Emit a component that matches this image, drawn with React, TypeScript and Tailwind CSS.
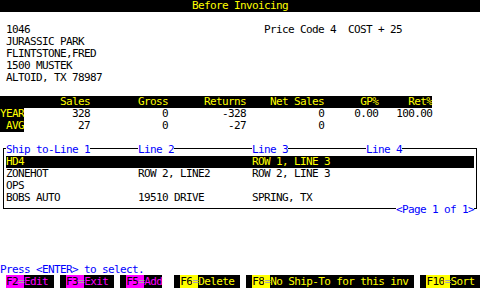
import React from 'react';

type Seg = { col: number; text: string; cls?: string };

// one 12px terminal line; segments are placed by column (6px per cell)
const Row = ({ segs = [], className = '' }: { segs?: Seg[]; className?: string }) => {
  let pos = 0;
  const parts: React.ReactNode[] = [];
  segs.forEach((s, i) => {
    if (s.col > pos) parts.push(' '.repeat(s.col - pos));
    parts.push(
      <span key={i} className={s.cls}>
        {s.text}
      </span>
    );
    pos = s.col + s.text.length;
  });
  return (
    <div className={`h-[12px] leading-[12px] whitespace-pre ${className}`}>{parts.length ? parts : ' '}</div>
  );
};

const Y = 'text-[#ffff00]';
const B = 'text-[#0000ff] bg-white';

const FKey = ({ k, label, bg, fg, pad = true }: { k: string; label: string; bg: string; fg: string; pad?: boolean }) => (
  <span className="bg-black">
    {pad ? ' ' : ''}
    <span className={`${bg} text-black`}>{k}</span>
    <span className={`${bg} text-[#a8a8a8]`}>=</span>
    <span className={fg}>{label}</span>
  </span>
);

export default function App() {
  return (
    <div className="w-[480px] h-[288px] bg-white text-black font-['DejaVu_Sans_Mono',monospace] text-[11px] tracking-[-0.622px] overflow-hidden">
      <Row className="bg-black" segs={[{ col: 32, text: 'Before Invoicing', cls: Y }]} />
      <Row />
      <Row
        segs={[
          { col: 1, text: '1046' },
          { col: 44, text: 'Price Code 4  COST + 25' },
        ]}
      />
      <Row segs={[{ col: 1, text: 'JURASSIC PARK' }]} />
      <Row segs={[{ col: 1, text: 'FLINTSTONE,FRED' }]} />
      <Row segs={[{ col: 1, text: '1500 MUSTEK' }]} />
      <Row segs={[{ col: 1, text: 'ALTOID, TX 78987' }]} />
      <Row />

      {/* sales history */}
      <Row
        className={`bg-black w-[432px] ${Y}`}
        segs={[
          { col: 10, text: 'Sales' },
          { col: 23, text: 'Gross' },
          { col: 34, text: 'Returns' },
          { col: 45, text: 'Net Sales' },
          { col: 60, text: 'GP%' },
          { col: 68, text: 'Ret%' },
        ]}
      />
      <Row
        segs={[
          { col: 0, text: 'YEAR', cls: `bg-black ${Y}` },
          { col: 12, text: '328' },
          { col: 27, text: '0' },
          { col: 37, text: '-328' },
          { col: 53, text: '0' },
          { col: 59, text: '0.00' },
          { col: 66, text: '100.00' },
        ]}
      />
      <Row
        segs={[
          { col: 0, text: ' AVG', cls: `bg-black ${Y}` },
          { col: 13, text: '27' },
          { col: 27, text: '0' },
          { col: 38, text: '-27' },
          { col: 53, text: '0' },
        ]}
      />
      <Row />

      {/* ship-to list */}
      <div className="relative">
        <div className="absolute left-[3px] right-[3px] top-[4px] bottom-[7px] border border-black" />
        <Row
          className="relative"
          segs={[
            { col: 1, text: 'Ship to-Line 1', cls: B },
            { col: 23, text: 'Line 2', cls: B },
            { col: 42, text: 'Line 3', cls: B },
            { col: 61, text: 'Line 4', cls: B },
          ]}
        />
        <Row
          className={`relative bg-black ml-[6px] w-[468px] ${Y}`}
          segs={[
            { col: 0, text: 'HD4' },
            { col: 41, text: 'ROW 1, LINE 3' },
          ]}
        />
        <Row
          className="relative"
          segs={[
            { col: 1, text: 'ZONEHOT' },
            { col: 23, text: 'ROW 2, LINE2' },
            { col: 42, text: 'ROW 2, LINE 3' },
          ]}
        />
        <Row className="relative" segs={[{ col: 1, text: 'OPS' }]} />
        <Row
          className="relative"
          segs={[
            { col: 1, text: 'BOBS AUTO' },
            { col: 23, text: '19510 DRIVE' },
            { col: 42, text: 'SPRING, TX' },
          ]}
        />
        <Row className="relative" segs={[{ col: 66, text: '<Page 1 of 1>', cls: B }]} />
      </div>

      <Row />
      <Row />
      <Row />
      <Row />
      <Row segs={[{ col: 0, text: 'Press <ENTER> to select.', cls: 'text-[#0000ff]' }]} />
      <div className="h-[12px] leading-[12px] whitespace-pre">
        {' '}
        <FKey k="F2" label="Edit " bg="bg-[#ff00ff]" fg="text-[#ff00ff]" pad={false} />
        {' '}
        <FKey k="F3" label="Exit " bg="bg-[#ff00ff]" fg="text-[#ff00ff]" />
        {' '}
        <FKey k="F5" label="Add" bg="bg-[#ff00ff]" fg="text-[#ff00ff]" />
        {'  '}
        <FKey k="F6" label="Delete " bg="bg-[#ffff00]" fg={Y} />
        {' '}
        <FKey k="F8" label="No Ship-To for this inv " bg="bg-[#ffff00]" fg={Y} />
        {' '}
        <FKey k="F10" label="Sort " bg="bg-[#ffff00]" fg={Y} />
      </div>
    </div>
  );
}
